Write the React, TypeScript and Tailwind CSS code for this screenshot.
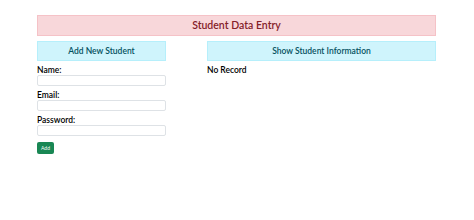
export default function App() {
  const font = { fontFamily: 'Lato, "Noto Sans", sans-serif' };
  return (
    <div className="w-[474px] h-[220px] bg-white pt-[15px] px-[37px]" style={font}>
      <div className="h-[21px] w-[399px] bg-[#f8d7da] border border-[#f5c2c7] flex items-center justify-center text-[10.5px] font-semibold text-[#842029]">
        Student Data Entry
      </div>
      <div className="flex mt-[5px] gap-[41px]">
        <div className="w-[129px] flex flex-col">
          <div className="h-[20px] bg-[#cff4fc] border border-[#b6effb] flex items-center justify-center text-[8.5px] font-semibold text-[#055160]">
            Add New Student
          </div>
          <label className="mt-[4px] h-[10px] leading-[10px] text-[8.5px] font-semibold text-black">Name:</label>
          <input className="h-[11px] border border-[#dee2e6] rounded-[2px] bg-white" />
          <label className="mt-[4px] h-[10px] leading-[10px] text-[8.5px] font-semibold text-black">Email:</label>
          <input className="h-[11px] border border-[#dee2e6] rounded-[2px] bg-white" />
          <label className="mt-[4px] h-[10px] leading-[10px] text-[8.5px] font-semibold text-black">Password:</label>
          <input className="h-[11px] border border-[#dee2e6] rounded-[2px] bg-white" />
          <button className="mt-[6px] h-[12px] w-[17px] bg-[#198754] rounded-[2px] text-white text-[5px] leading-[12px]">
            Add
          </button>
        </div>
        <div className="w-[229px] flex flex-col">
          <div className="h-[20px] bg-[#cff4fc] border border-[#b6effb] flex items-center justify-center text-[8.5px] font-semibold text-[#055160]">
            Show Student Information
          </div>
          <div className="mt-[4px] h-[10px] leading-[10px] text-[8.5px] font-semibold text-black">No Record</div>
        </div>
      </div>
    </div>
  );
}
